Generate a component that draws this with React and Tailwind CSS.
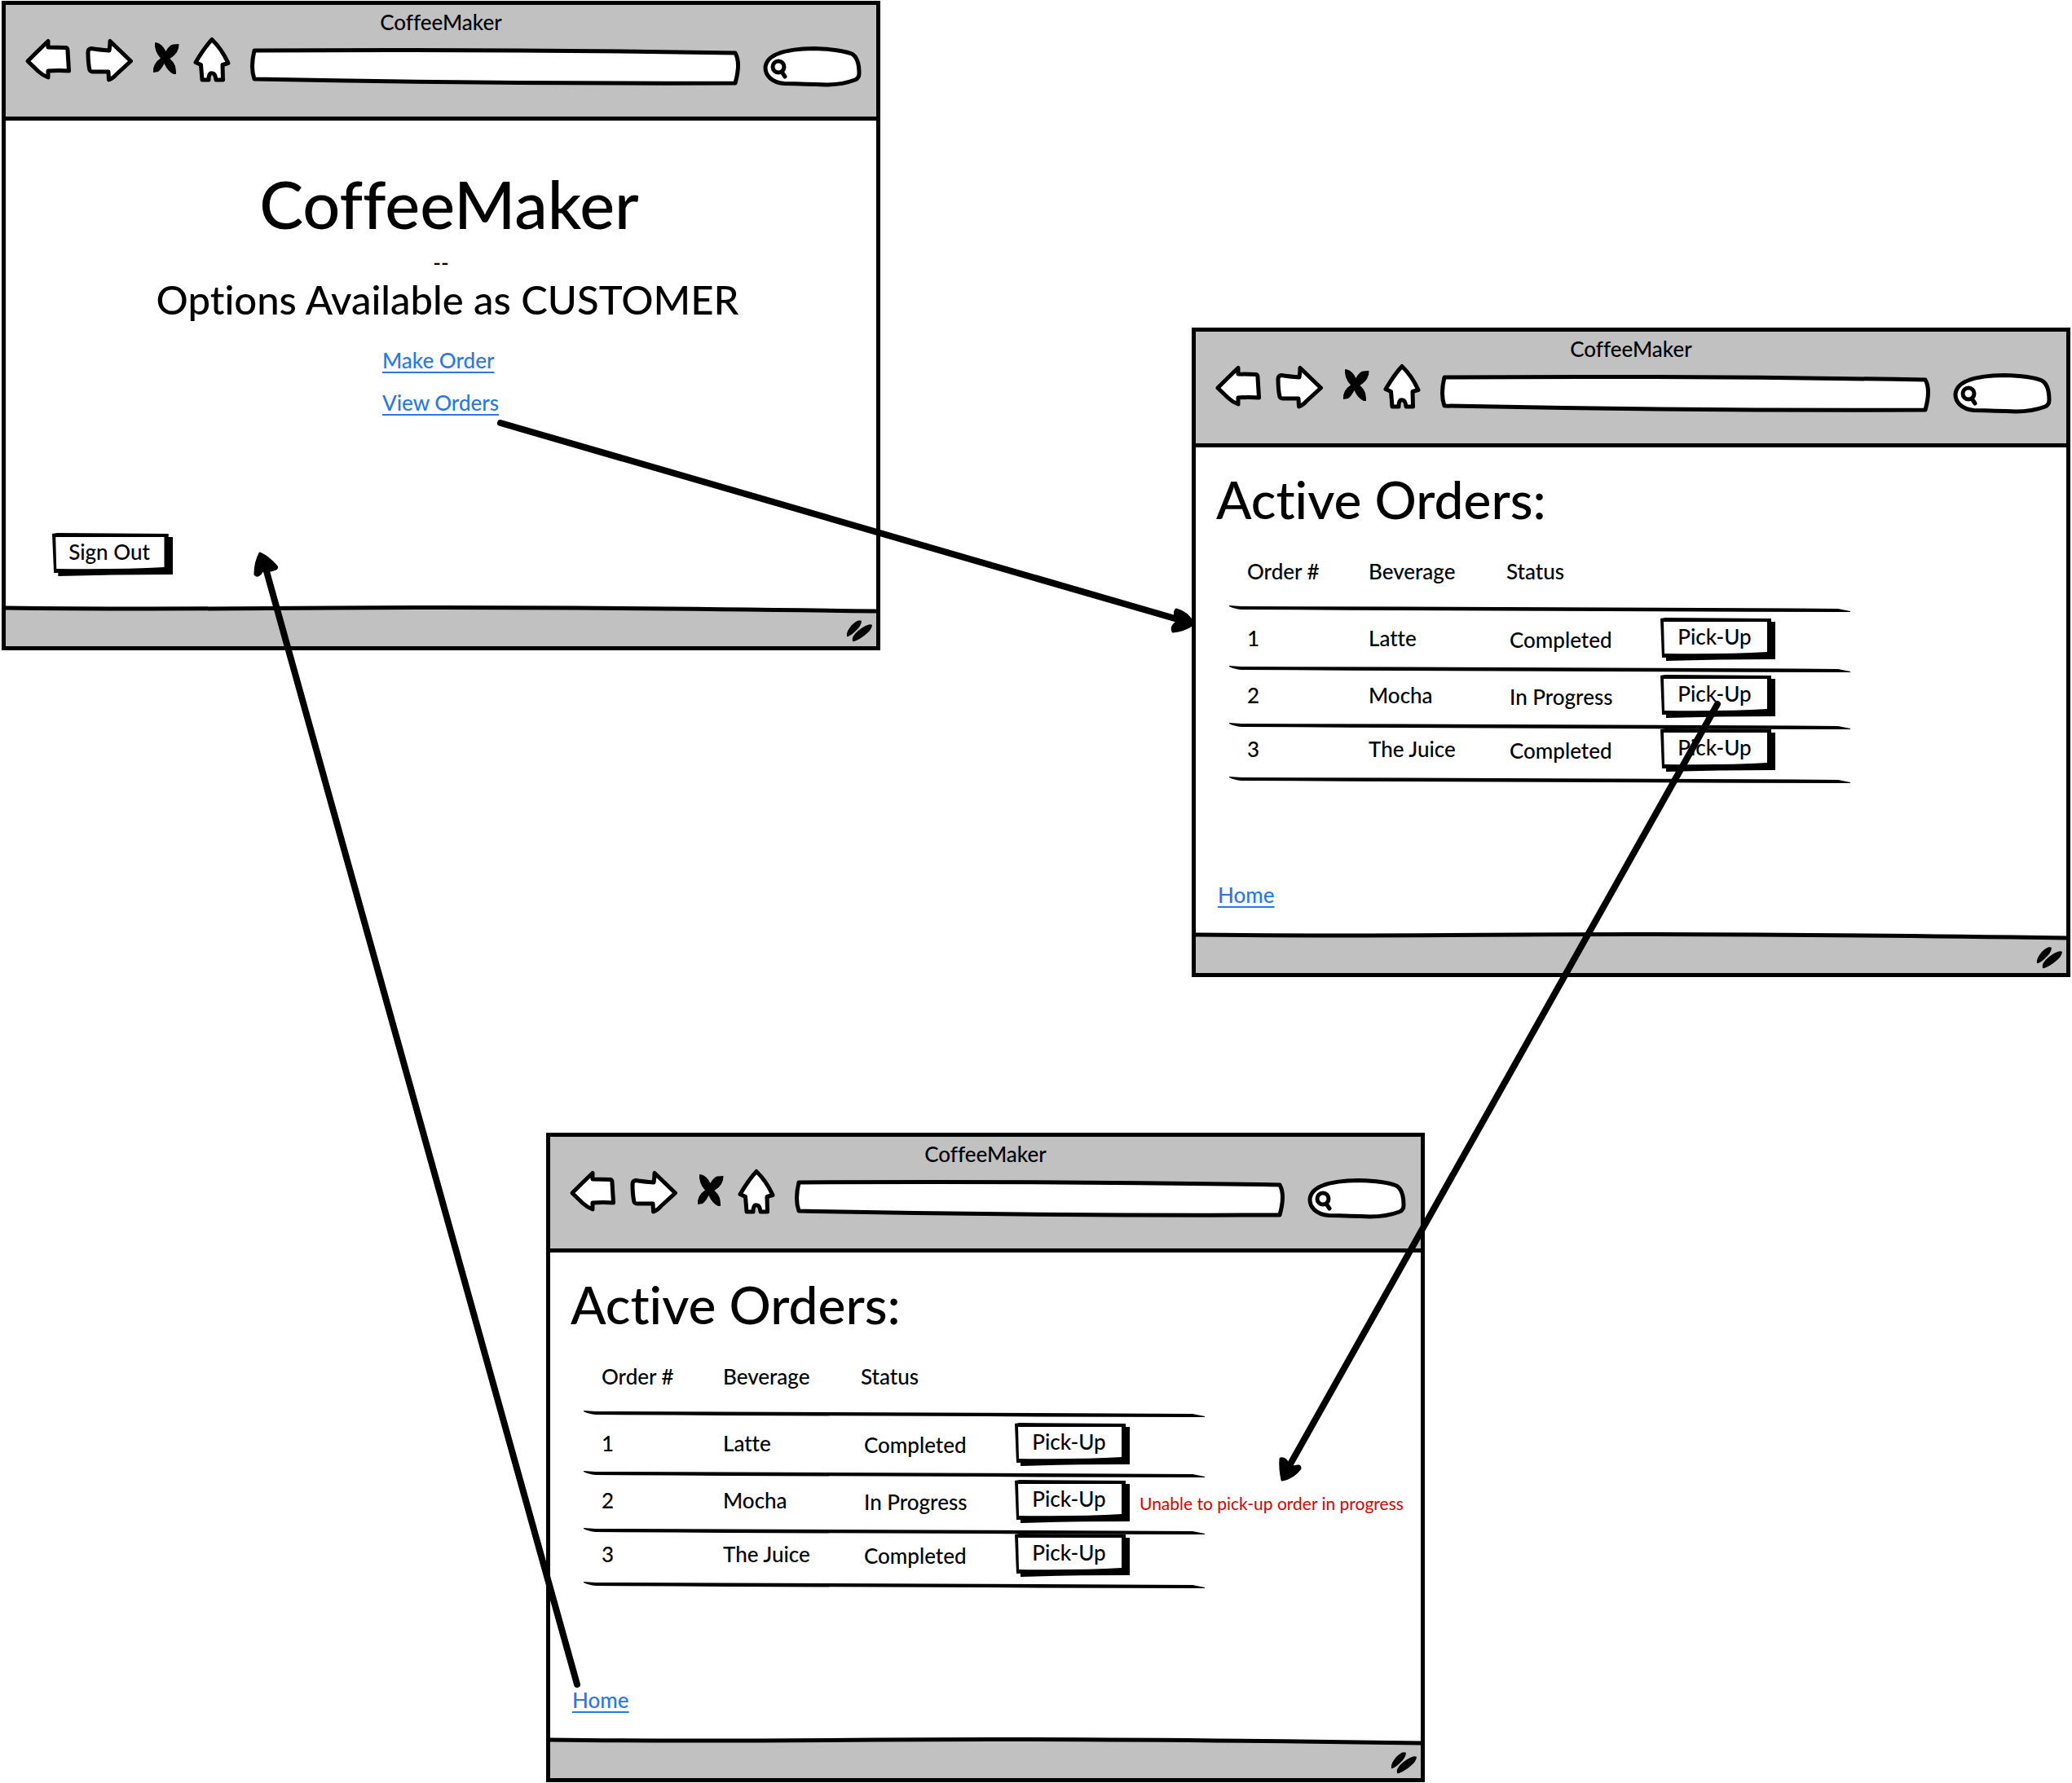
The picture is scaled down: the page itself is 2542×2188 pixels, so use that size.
const BackIcon = () => (
  <svg width="60" height="60" viewBox="29 43 60 60" className="block" fill="#fff" stroke="#000" strokeWidth="5" strokeLinejoin="round">
    <path d="M34 75Q48 61 59 50.5L59 58L81 58.500Q83 59 83 62L84.500 87Q72 86 59 87L59 95Q53 93 47 87.500Z" />
  </svg>
);
const ForwardIcon = () => (
  <svg width="60" height="60" viewBox="103 43 60 60" className="block" fill="#fff" stroke="#000" strokeWidth="5" strokeLinejoin="round">
    <path d="M160.500 75L135 50.500Q135 57 134 62Q121 61 112 59.500Q108 60 108 64Q108 77 110 86Q111 88 114 88L133 88L133.500 98Q139 96 143 91Z" />
  </svg>
);
const StopIcon = () => (
  <svg width="36" height="44" viewBox="186 48 36 44" className="block" fill="#000">
    <path d="M190 51.300L192 51.300Q199 53 203.500 62Q207 55 212 53.500L219.500 53Q220 64 208.500 71Q213 75 214.500 79Q216 83 216 90L213 90Q206 87 201.500 77Q198 84 194 87L188 88Q187 77 197 70.500Q189 62 190 51.300Z" />
  </svg>
);
const HomeIcon = () => (
  <svg width="48" height="60" viewBox="236 43 48 60" className="block" fill="#fff" stroke="#000" strokeWidth="5" strokeLinejoin="round">
    <path d="M260 48.500Q251 58 240 76.500L246.500 79.500L248 98L256 98Q256 89 260 90Q264 89 265 98L273.500 98L273 79.500L280 77.500Q272 60 260 48.500Z" />
  </svg>
);

const icons = "block cursor-pointer";

function Connectors() {
  return (
    <svg
      className="pointer-events-none absolute top-0 left-0"
      width="2542"
      height="2188"
      viewBox="0 0 2542 2188"
      stroke="#000"
      strokeLinecap="round"
      strokeLinejoin="round"
      aria-hidden="true"
    >
      <g strokeWidth="8">
        <path d="M614 519L1452 762" />
        <path d="M708 2067L325 694" />
        <path d="M2107 864L1580 1802" />
      </g>
      <g strokeWidth="3">
        <path d="M1464 766Q1458 752 1443 748Q1439 753 1445 763Q1436 768 1439 775Q1452 774 1464 766Z" />
        <path d="M319 679Q313 690 313 705Q317 709 322 700L332 700Q342 698 339 695Q330 684 319 679Z" />
        <path d="M1573 1816Q1570 1802 1571 1790Q1577 1789 1580 1796L1588 1800Q1595 1797 1595 1802Q1587 1813 1573 1816Z" />
      </g>
    </svg>
  );
}

function BrowserWindow({ className, children }) {
  return (
    <section className={`absolute flex h-[797px] w-[1078px] flex-col border-5 border-black bg-white ${className}`}>
      <header className="flex h-[142px] shrink-0 flex-col border-b-5 border-black bg-[#c1c1c1]">
        <p className="h-[37px] pt-[3px] text-center leading-9">CoffeeMaker</p>
        <div className="flex items-start pr-[18px] pl-[22px]">
          <button aria-label="Back" className={icons}><BackIcon /></button>
          <button aria-label="Forward" className={`${icons} ml-[14px]`}><ForwardIcon /></button>
          <button aria-label="Stop" className={`${icons} mt-[6px] ml-[23px]`}><StopIcon /></button>
          <button aria-label="Home page" className={`${icons} ml-[14px]`}><HomeIcon /></button>
          <div className="relative mt-[15px] ml-[22px] h-12 flex-1">
            <svg className="absolute inset-0 h-full w-full" viewBox="306 59 603 48" preserveAspectRatio="none" fill="#fff" stroke="#000" strokeWidth="5" strokeLinejoin="round" aria-hidden="true">
              <path d="M312 63Q600 61 902 66Q909 78 902 103Q600 104 312 98Q307 84 312 63Z" />
            </svg>
            <input aria-label="Address" className="relative block h-full w-full bg-transparent px-4 outline-none" />
          </div>
          <div className="relative mt-[14px] ml-[26px] h-[50px] w-[122px]">
            <svg className="absolute inset-0" width="122" height="50" viewBox="935 57 122 50" fill="#fff" stroke="#000" strokeWidth="5" strokeLinejoin="round" strokeLinecap="round" aria-hidden="true">
              <path d="M962 102.500C946 101 939 92 939 83C940 67 963 60 999 59.500C1018 60 1035 62 1045 66C1052 70 1054 80 1054 90Q1054 96 1049 98Q1033 104 1013 104Q990 103 962 102.500Z" />
              <circle cx="955" cy="82" r="7" />
              <path d="M959 88L963 94" />
            </svg>
            <input aria-label="Search" className="relative block h-full w-full bg-transparent pr-4 pl-9 outline-none" />
          </div>
        </div>
      </header>
      <div className="flex flex-1 flex-col">{children}</div>
      <footer className="relative h-[50px] shrink-0">
        <svg className="absolute inset-0 h-full w-full" viewBox="0 0 1069 50" preserveAspectRatio="none" aria-hidden="true">
          <path d="M0 3Q150 5 400 3T1069 7V50H0Z" fill="#c1c1c1" />
          <path d="M0 3Q150 5 400 3T1069 7" fill="none" stroke="#000" strokeWidth="5" />
        </svg>
        <svg className="absolute right-[3px] bottom-[3px]" width="34" height="30" viewBox="1038 761 34 30" aria-hidden="true">
          <path d="M1039 782Q1038 776 1045 768Q1053 760 1057 763Q1057 769 1048 777Q1041 783 1039 782Z" />
          <path d="M1046 788Q1044 782 1054 774Q1066 765 1070 768Q1070 774 1059 782Q1049 789 1046 788Z" />
        </svg>
      </footer>
    </section>
  );
}

function SketchButton({ children, className }) {
  return (
    <button className={`relative block h-[53px] cursor-pointer pr-2 pb-2 text-center ${className}`}>
      <svg className="absolute inset-0 h-full w-full" viewBox="0 0 141 53" preserveAspectRatio="none" aria-hidden="true">
        <path d="M7 5H141V51Q70 51 7 53Z" />
        <path d="M0 1L6 0L136 1V48L2 49Z" />
        <path d="M4 5Q60 5 131 5V42Q80 45 5 44Z" fill="#fff" />
      </svg>
      <span className="relative">{children}</span>
    </button>
  );
}

const RowLine = () => (
  <svg className="absolute -bottom-[5px] left-0 h-3 w-full" viewBox="0 0 762 12" preserveAspectRatio="none" aria-hidden="true">
    <path d="M0 1L15 2Q400 3 747 5L762 8V9L747 9Q400 8 15 6Q6 5 0 2Z" />
  </svg>
);

const orders = [
  { number: 1, beverage: "Latte", status: "Completed", height: "h-[74px]" },
  { number: 2, beverage: "Mocha", status: "In Progress", height: "h-[70px]" },
  { number: 3, beverage: "The Juice", status: "Completed", height: "h-[66px]" },
];

const link = "text-[#2b78e4] underline decoration-2 underline-offset-4";

function OrdersPage({ className, error }) {
  return (
    <BrowserWindow className={className}>
      <h1 className="mt-[26px] ml-[25px] text-[64px] leading-[76px]">Active Orders:</h1>
      <table className="mt-[13px] ml-[41px] w-[762px] table-fixed text-left">
        <thead>
          <tr className="relative h-[85px] align-top">
            <th className="w-[171px] pt-[21px] pl-[22px] font-medium">Order #<RowLine /></th>
            <th className="w-[169px] pt-[21px] font-medium">Beverage</th>
            <th className="w-[189px] pt-[21px] font-medium">Status</th>
            <td></td>
          </tr>
        </thead>
        <tbody>
          {orders.map((o) => (
            <tr key={o.number} className={`relative align-bottom ${o.height}`}>
              <td className="pb-6 pl-[22px]">{o.number}<RowLine /></td>
              <td className="pb-6">{o.beverage}</td>
              <td className="pb-[22px] pl-1">{o.status}</td>
              <td className="pb-3">
                <div className="flex items-center whitespace-nowrap">
                  <SketchButton className="w-[141px] shrink-0">Pick-Up</SketchButton>
                  {error && o.number === 2 && (
                    <span role="alert" className="ml-3 pt-1 text-[21px] font-normal text-[#d40000]">{error}</span>
                  )}
                </div>
              </td>
            </tr>
          ))}
        </tbody>
      </table>
      <a href="#home" className={`${link} mt-auto mb-[30px] ml-[27px] self-start`}>Home</a>
    </BrowserWindow>
  );
}

export default function App() {
  return (
    <main className="relative min-h-[2188px] overflow-hidden bg-white font-['Lato','Open_Sans',sans-serif] text-[26px] leading-8 font-medium text-black [font-variant-ligatures:none]">
      <BrowserWindow className="top-px left-[2px]">
        <div className="flex flex-col items-center">
          <h1 className="mt-[52px] ml-5 text-[81px] leading-[100px]">CoffeeMaker</h1>
          <p className="mt-1.5">--</p>
          <h2 className="ml-4 text-[49px] leading-[58px]">Options Available as CUSTOMER</h2>
          <nav className="mt-[30px] flex w-36 flex-col items-start gap-5 whitespace-nowrap">
            <a href="#make-order" className={link}>Make Order</a>
            <a href="#view-orders" className={link}>View Orders</a>
          </nav>
        </div>
        <SketchButton className="mt-auto mb-9 ml-[57px] w-[148px]">Sign Out</SketchButton>
      </BrowserWindow>
      <OrdersPage className="top-[402px] left-[1462px]" />
      <OrdersPage className="top-[1390px] left-[670px]" error="Unable to pick-up order in progress" />
      <Connectors />
    </main>
  );
}
